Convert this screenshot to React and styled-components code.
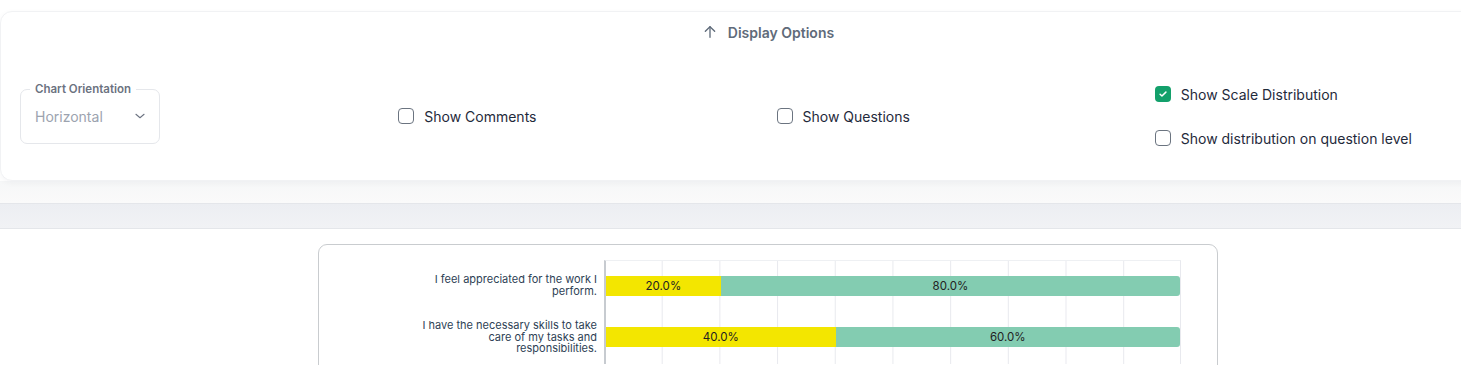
import React from "react";
import styled, { createGlobalStyle } from "styled-components";

const rows = [
  { label: "I feel appreciated for the work I perform.", low: 20, high: 80 },
  {
    label: "I have the necessary skills to take care of my tasks and responsibilities.",
    low: 40,
    high: 60,
  },
];

const GlobalStyle = createGlobalStyle`
  html, body {
    margin: 0;
    padding: 0;
    background: #ffffff;
    overflow: hidden;
  }
  body {
    font-family: Inter, "Noto Sans", "Liberation Sans", sans-serif;
    color: #1f2937;
  }
`;

function ArrowUp() {
  return (
    <svg width="16" height="16" viewBox="0 0 24 24" fill="none" stroke="currentColor" strokeWidth="2" strokeLinecap="round" strokeLinejoin="round">
      <path d="M12 20V4" />
      <path d="M5 11l7-7 7 7" />
    </svg>
  );
}

function Chevron() {
  return (
    <svg width="14" height="14" viewBox="0 0 24 24" fill="none" stroke="#6b7280" strokeWidth="1.8" strokeLinecap="round" strokeLinejoin="round">
      <path d="M5 9l7 6 7-6" />
    </svg>
  );
}

function Check() {
  return (
    <svg width="10" height="10" viewBox="0 0 24 24" fill="none" stroke="#fff" strokeWidth="3.5" strokeLinecap="round" strokeLinejoin="round">
      <path d="M5 12.5l4.5 4.5L19 7.5" />
    </svg>
  );
}

function Option({ label, checked }) {
  return (
    <OptionRow>
      <Box $checked={checked}>{checked && <Check />}</Box>
      <span>{label}</span>
    </OptionRow>
  );
}

export default function App() {
  return (
    <Page>
      <GlobalStyle />
      <OptionsCard>
        <Toggle>
          <ArrowUp />
          Display Options
        </Toggle>
        <OptionsGrid>
          <Select>
            <Legend>Chart Orientation</Legend>
            <SelectValue>Horizontal</SelectValue>
            <Chevron />
          </Select>
          <Option label="Show Comments" />
          <Option label="Show Questions" />
          <Stack>
            <Option label="Show Scale Distribution" checked />
            <Option label="Show distribution on question level" />
          </Stack>
        </OptionsGrid>
      </OptionsCard>
      <Shade />
      <Band />
      <ChartArea>
        <ChartCard>
          <Chart>
            {rows.map((row) => (
              <ChartRow key={row.label}>
                <Label>{row.label}</Label>
                <Plot>
                  <Bar>
                    <Segment $color="#f3e600" style={{ width: `${row.low}%` }}>
                      {row.low.toFixed(1)}%
                    </Segment>
                    <Segment $color="#83ccb1" $last style={{ width: `${row.high}%` }}>
                      {row.high.toFixed(1)}%
                    </Segment>
                  </Bar>
                </Plot>
              </ChartRow>
            ))}
          </Chart>
        </ChartCard>
      </ChartArea>
    </Page>
  );
}

const Page = styled.div`
  width: 1536px;
  padding-top: 11px;
`;

const OptionsCard = styled.div`
  background: #fff;
  border: 1px solid #f1f2f4;
  border-radius: 12px;
  box-shadow: 0 2px 6px rgba(17, 24, 39, 0.04);
  padding: 9px 19px 20px;
  height: 170px;
  box-sizing: border-box;
  position: relative;
  z-index: 1;
`;

const Toggle = styled.div`
  display: flex;
  align-items: center;
  justify-content: center;
  gap: 10px;
  font-size: 14px;
  font-weight: 600;
  color: #5f6b7a;
  height: 22px;
`;

const OptionsGrid = styled.div`
  display: grid;
  grid-template-columns: repeat(4, 1fr);
  gap: 17px;
  align-items: center;
  margin-top: 37px;
  height: 72px;
`;

const Select = styled.div`
  position: relative;
  width: 140px;
  height: 55px;
  box-sizing: border-box;
  border: 1px solid #e5e7eb;
  border-radius: 7px;
  display: flex;
  align-items: center;
  justify-content: space-between;
  padding: 0 12px 0 14px;
  color: #9ca3af;
`;

const Legend = styled.span`
  position: absolute;
  top: -8px;
  left: 9px;
  padding: 0 5px;
  background: #fff;
  font-size: 11.5px;
  font-weight: 600;
  color: #6b7280;
  line-height: 14px;
`;

const SelectValue = styled.span`
  font-size: 14px;
  color: #9ca3af;
`;

const Stack = styled.div`
  display: flex;
  flex-direction: column;
  gap: 26px;
`;

const OptionRow = styled.label`
  display: flex;
  align-items: center;
  gap: 10px;
  font-size: 14px;
  color: #1f2a3b;
  height: 18px;
`;

const Box = styled.span`
  width: 16px;
  height: 16px;
  box-sizing: border-box;
  border-radius: 4px;
  border: ${(p) => (p.$checked ? "none" : "1.5px solid #6b7480")};
  background: ${(p) => (p.$checked ? "#13a06b" : "#fff")};
  display: flex;
  align-items: center;
  justify-content: center;
  flex-shrink: 0;
`;

const Shade = styled.div`
  height: 22px;
  background: linear-gradient(#f6f7f8, #fafafa);
`;

const Band = styled.div`
  height: 24px;
  background: linear-gradient(#eceef2, #f1f2f5);
  border-top: 1px solid #e4e6ea;
  border-bottom: 1px solid #e4e6ea;
`;

const ChartArea = styled.div`
  padding-top: 15px;
  display: flex;
  justify-content: center;
`;

const ChartCard = styled.div`
  width: 900px;
  height: 200px;
  box-sizing: border-box;
  border: 1px solid #c9cccf;
  border-radius: 9px;
  padding: 15px 36px 0 0;
`;

const Chart = styled.div`
  display: flex;
  flex-direction: column;
`;

const ChartRow = styled.div`
  display: grid;
  grid-template-columns: 285px 577px;
  height: 52px;
`;

const Label = styled.div`
  justify-self: end;
  width: 180px;
  padding-right: 7px;
  text-align: right;
  font-size: 11px;
  line-height: 11.5px;
  color: #2e3f55;
  align-self: center;
  margin-top: -1px;
`;

const Plot = styled.div`
  display: flex;
  align-items: center;
  border-left: 2px solid #c7cbd0;
  background-image: linear-gradient(to right, #e8e9ee 1px, transparent 1px);
  background-size: 57.7px 100%;
  background-position: 55.7px 0;
  border-right: 1px solid #e8e9ee;
  ${ChartRow}:first-child & {
    border-top: 1px solid #eef0f3;
  }
`;

const Bar = styled.div`
  display: flex;
  width: 100%;
  height: 20px;
  margin-bottom: 2px;
`;

const Segment = styled.div`
  background: ${(p) => p.$color};
  display: flex;
  align-items: center;
  justify-content: center;
  font-size: 11.5px;
  color: #222;
  border-radius: ${(p) => (p.$last ? "0 3px 3px 0" : "0")};
`;
